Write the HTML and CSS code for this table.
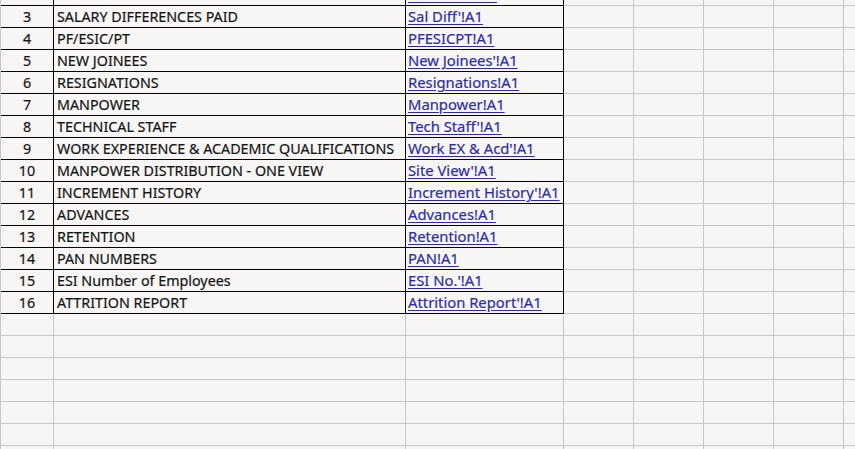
FILE: index.html
```html
<!DOCTYPE html>
<html lang="en">
<head>
<meta charset="utf-8">
<title>Index</title>
<link rel="stylesheet" href="styles.css">
</head>
<body>
<div class="viewport">
  <div class="sheet">
    <div class="row t"><div class="c a">2</div><div class="c b">SALARY SHEET</div><div class="c l"><a href="#">Sal Sheet'!A1</a></div><div class="c"></div><div class="c"></div><div class="c"></div><div class="c"></div><div class="c"></div></div>
    <div class="row t"><div class="c a">3</div><div class="c b">SALARY DIFFERENCES PAID</div><div class="c l"><a href="#">Sal Diff'!A1</a></div><div class="c"></div><div class="c"></div><div class="c"></div><div class="c"></div><div class="c"></div></div>
    <div class="row t"><div class="c a">4</div><div class="c b">PF/ESIC/PT</div><div class="c l"><a href="#">PFESICPT!A1</a></div><div class="c"></div><div class="c"></div><div class="c"></div><div class="c"></div><div class="c"></div></div>
    <div class="row t"><div class="c a">5</div><div class="c b">NEW JOINEES</div><div class="c l"><a href="#">New Joinees'!A1</a></div><div class="c"></div><div class="c"></div><div class="c"></div><div class="c"></div><div class="c"></div></div>
    <div class="row t"><div class="c a">6</div><div class="c b">RESIGNATIONS</div><div class="c l"><a href="#">Resignations!A1</a></div><div class="c"></div><div class="c"></div><div class="c"></div><div class="c"></div><div class="c"></div></div>
    <div class="row t"><div class="c a">7</div><div class="c b">MANPOWER</div><div class="c l"><a href="#">Manpower!A1</a></div><div class="c"></div><div class="c"></div><div class="c"></div><div class="c"></div><div class="c"></div></div>
    <div class="row t"><div class="c a">8</div><div class="c b">TECHNICAL STAFF</div><div class="c l"><a href="#">Tech Staff'!A1</a></div><div class="c"></div><div class="c"></div><div class="c"></div><div class="c"></div><div class="c"></div></div>
    <div class="row t"><div class="c a">9</div><div class="c b">WORK EXPERIENCE &amp; ACADEMIC QUALIFICATIONS</div><div class="c l"><a href="#">Work EX &amp; Acd'!A1</a></div><div class="c"></div><div class="c"></div><div class="c"></div><div class="c"></div><div class="c"></div></div>
    <div class="row t"><div class="c a">10</div><div class="c b">MANPOWER DISTRIBUTION - ONE VIEW</div><div class="c l"><a href="#">Site View'!A1</a></div><div class="c"></div><div class="c"></div><div class="c"></div><div class="c"></div><div class="c"></div></div>
    <div class="row t"><div class="c a">11</div><div class="c b">INCREMENT HISTORY</div><div class="c l"><a href="#">Increment History'!A1</a></div><div class="c"></div><div class="c"></div><div class="c"></div><div class="c"></div><div class="c"></div></div>
    <div class="row t"><div class="c a">12</div><div class="c b">ADVANCES</div><div class="c l"><a href="#">Advances!A1</a></div><div class="c"></div><div class="c"></div><div class="c"></div><div class="c"></div><div class="c"></div></div>
    <div class="row t"><div class="c a">13</div><div class="c b">RETENTION</div><div class="c l"><a href="#">Retention!A1</a></div><div class="c"></div><div class="c"></div><div class="c"></div><div class="c"></div><div class="c"></div></div>
    <div class="row t"><div class="c a">14</div><div class="c b">PAN NUMBERS</div><div class="c l"><a href="#">PAN!A1</a></div><div class="c"></div><div class="c"></div><div class="c"></div><div class="c"></div><div class="c"></div></div>
    <div class="row t"><div class="c a">15</div><div class="c b">ESI Number of Employees</div><div class="c l"><a href="#">ESI No.'!A1</a></div><div class="c"></div><div class="c"></div><div class="c"></div><div class="c"></div><div class="c"></div></div>
    <div class="row t"><div class="c a">16</div><div class="c b">ATTRITION REPORT</div><div class="c l"><a href="#">Attrition Report'!A1</a></div><div class="c"></div><div class="c"></div><div class="c"></div><div class="c"></div><div class="c"></div></div>
    <div class="row"><div class="c a"></div><div class="c b"></div><div class="c l"></div><div class="c"></div><div class="c"></div><div class="c"></div><div class="c"></div><div class="c"></div></div>
    <div class="row"><div class="c a"></div><div class="c b"></div><div class="c l"></div><div class="c"></div><div class="c"></div><div class="c"></div><div class="c"></div><div class="c"></div></div>
    <div class="row"><div class="c a"></div><div class="c b"></div><div class="c l"></div><div class="c"></div><div class="c"></div><div class="c"></div><div class="c"></div><div class="c"></div></div>
    <div class="row"><div class="c a"></div><div class="c b"></div><div class="c l"></div><div class="c"></div><div class="c"></div><div class="c"></div><div class="c"></div><div class="c"></div></div>
    <div class="row"><div class="c a"></div><div class="c b"></div><div class="c l"></div><div class="c"></div><div class="c"></div><div class="c"></div><div class="c"></div><div class="c"></div></div>
    <div class="row"><div class="c a"></div><div class="c b"></div><div class="c l"></div><div class="c"></div><div class="c"></div><div class="c"></div><div class="c"></div><div class="c"></div></div>
    <div class="row"><div class="c a"></div><div class="c b"></div><div class="c l"></div><div class="c"></div><div class="c"></div><div class="c"></div><div class="c"></div><div class="c"></div></div>
  </div>
</div>
</body>
</html>
```
FILE: styles.css
```css
html, body {
  margin: 0;
  padding: 0;
  background: #f7f6f4;
}

.viewport {
  width: 855px;
  height: 449px;
  overflow: hidden;
}

.sheet {
  display: flex;
  flex-direction: column;
  margin-top: -16px;
  border-left: 1px solid #c8c8c8;
  width: 912px;
  font-family: "Noto Sans", "Open Sans", sans-serif;
  color: #141414;
}

.row {
  display: grid;
  grid-template-columns: 53px 352px 158px 70px 70px 70px 70px 70px;
  height: 22px;
  flex: 0 0 22px;
}

.c {
  box-sizing: border-box;
  height: 22px;
  border-right: 1px solid #c8c8c8;
  border-bottom: 1px solid #c8c8c8;
  line-height: 21px;
  font-size: 14.3px;
  white-space: nowrap;
  overflow: hidden;
  -webkit-text-stroke: 0.2px currentColor;
}

.a {
  text-align: center;
}

.b {
  padding-left: 3px;
}

.l {
  padding-left: 2px;
  font-size: 14.8px;
}

.l a {
  color: #2e2ea4;
  text-decoration: underline;
  text-underline-offset: 2px;
}

.t .a,
.t .b,
.t .l {
  border-right-color: #000;
  border-bottom-color: #000;
}
```
